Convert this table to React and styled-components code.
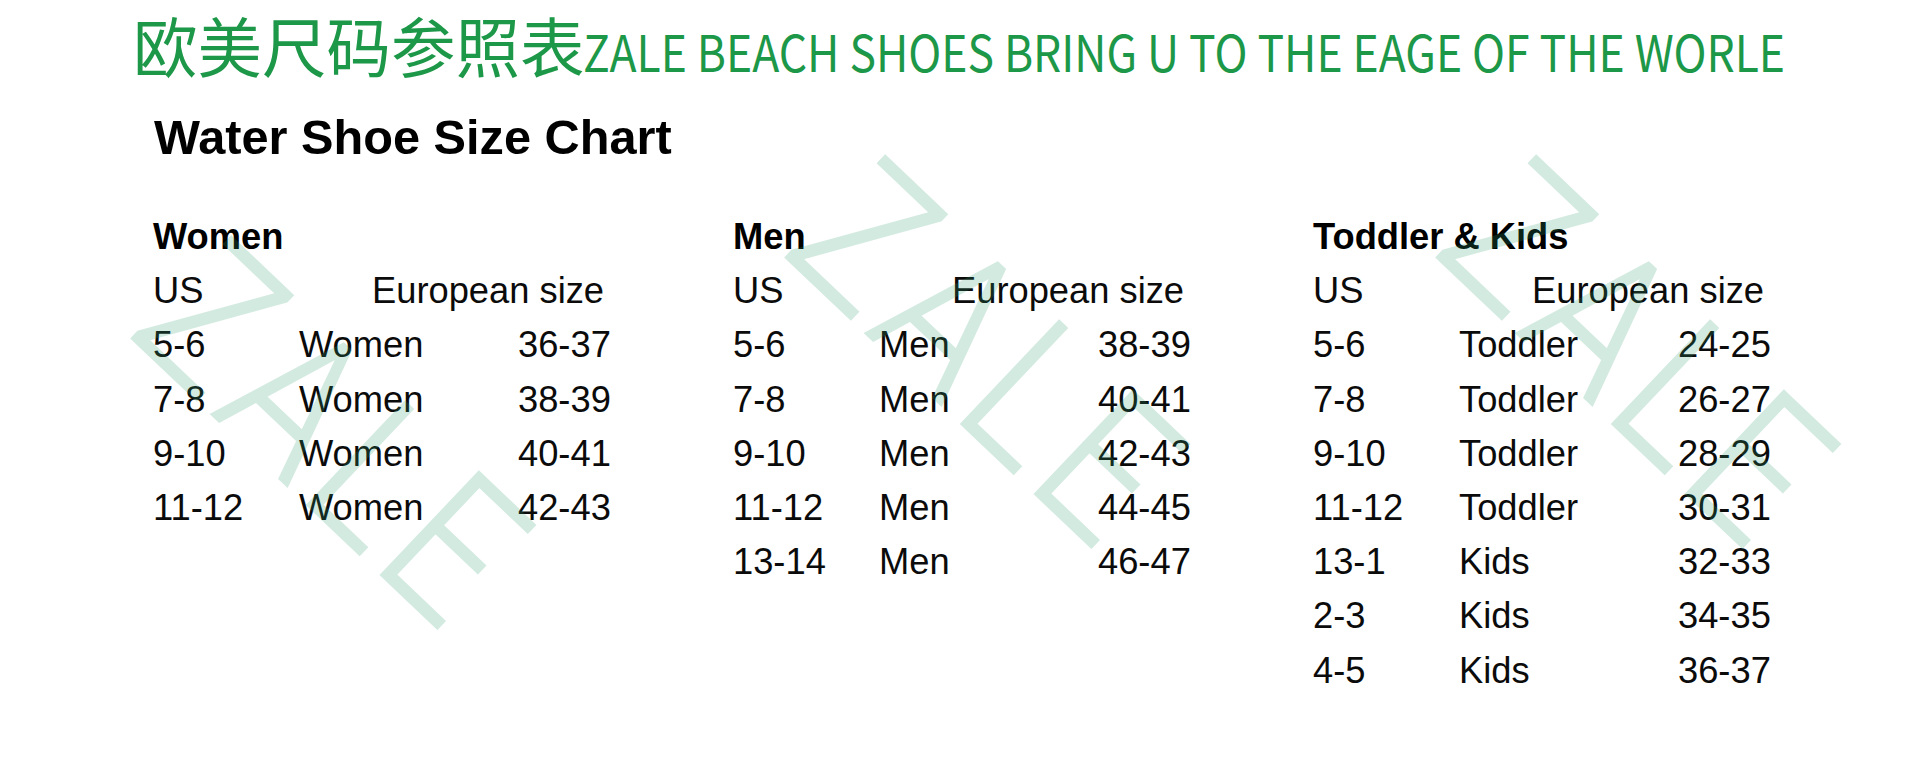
import React, { useLayoutEffect, useRef, useState } from "react";
import styled, { createGlobalStyle } from "styled-components";

const Global = createGlobalStyle`
  html, body { margin: 0; padding: 0; background: #fff; }
  body { width: 1919px; height: 766px; overflow: hidden; }
`;

const Page = styled.div`
  position: relative;
  width: 1919px;
  height: 766px;
  background: #fff;
  font-family: "Liberation Sans", Arial, sans-serif;
  color: #0b0b0b;
`;

const Banner = styled.h1`
  margin: 0;
  padding: 4px 0 0 133px;
  display: flex;
  align-items: baseline;
  color: #1c9848;
  font-family: "Noto Sans CJK SC", sans-serif;
  font-weight: 400;
  white-space: nowrap;
`;

const BannerCn = styled.span`
  font-size: 64.5px;
  line-height: 80px;
`;

const BannerEn = styled.span`
  display: inline-block;
  font-size: 51px;
  line-height: 80px;
  margin-left: -2px;
  transform-origin: 0 50%;
`;

const Title = styled.h2`
  margin: 17px 0 0 154px;
  font-size: 48.7px;
  line-height: 60px;
  font-weight: 700;
  color: #000;
`;

const Charts = styled.div`
  display: grid;
  grid-template-columns: repeat(3, 580px);
  padding-left: 153px;
  margin-top: 43px;
`;

const Chart = styled.section`
  display: grid;
  grid-template-columns: 146px 219px auto;
  grid-auto-rows: 54.2px;
  font-size: 36.3px;
  line-height: 54.2px;
  white-space: nowrap;
`;

const Heading = styled.div`
  grid-column: 1 / -1;
  font-weight: 700;
  color: #000;
`;

const EuHead = styled.div`
  grid-column: 2 / 4;
  padding-left: 73px;
`;

const Cell = styled.div``;

const Overlay = styled.svg`
  position: absolute;
  left: 0;
  top: 0;
  width: 1919px;
  height: 766px;
  pointer-events: none;
`;

const MarkGroup = styled.g`
  opacity: 0.21;
`;

const MarkText = styled.text`
  font-family: Roboto, "Liberation Sans", sans-serif;
  font-weight: 300;
  font-size: 200px;
  letter-spacing: 10px;
  fill: rgb(50, 160, 110);
  stroke: rgb(50, 160, 110);
  stroke-width: 2.2px;
  stroke-linejoin: miter;
`;

const charts = [
  {
    title: "Women",
    rows: [
      ["5-6", "Women", "36-37"],
      ["7-8", "Women", "38-39"],
      ["9-10", "Women", "40-41"],
      ["11-12", "Women", "42-43"],
    ],
  },
  {
    title: "Men",
    rows: [
      ["5-6", "Men", "38-39"],
      ["7-8", "Men", "40-41"],
      ["9-10", "Men", "42-43"],
      ["11-12", "Men", "44-45"],
      ["13-14", "Men", "46-47"],
    ],
  },
  {
    title: "Toddler & Kids",
    rows: [
      ["5-6", "Toddler", "24-25"],
      ["7-8", "Toddler", "26-27"],
      ["9-10", "Toddler", "28-29"],
      ["11-12", "Toddler", "30-31"],
      ["13-1", "Kids", "32-33"],
      ["2-3", "Kids", "34-35"],
      ["4-5", "Kids", "36-37"],
    ],
  },
];

const marks = [
  [126, 333],
  [780, 252],
  [1431, 252],
];

const EN_TARGET_WIDTH = 1202;

export default function App() {
  const enRef = useRef(null);
  const [enScale, setEnScale] = useState(0.89);

  useLayoutEffect(() => {
    if (enRef.current) {
      const w = enRef.current.offsetWidth;
      if (w > 0) setEnScale(EN_TARGET_WIDTH / w);
    }
  }, []);

  return (
    <Page>
      <Global />
      <Banner>
        <BannerCn>欧美尺码参照表</BannerCn>
        <BannerEn ref={enRef} style={{ transform: `scaleX(${enScale})` }}>
          ZALE BEACH SHOES BRING U TO THE EAGE OF THE WORLE
        </BannerEn>
      </Banner>
      <Title>Water Shoe Size Chart</Title>
      <Charts>
        {charts.map((c) => (
          <Chart key={c.title}>
            <Heading>{c.title}</Heading>
            <Cell>US</Cell>
            <EuHead>European size</EuHead>
            {c.rows.map((r, i) => (
              <React.Fragment key={i}>
                <Cell>{r[0]}</Cell>
                <Cell>{r[1]}</Cell>
                <Cell>{r[2]}</Cell>
              </React.Fragment>
            ))}
          </Chart>
        ))}
      </Charts>
      <Overlay viewBox="0 0 1919 766">
        {marks.map(([x, y], i) => (
          <MarkGroup key={i}>
            <MarkText
              x="0"
              y="0"
              transform={`translate(${x} ${y}) rotate(43.5) scale(0.88 1)`}
            >
              ZALE
            </MarkText>
          </MarkGroup>
        ))}
      </Overlay>
    </Page>
  );
}
